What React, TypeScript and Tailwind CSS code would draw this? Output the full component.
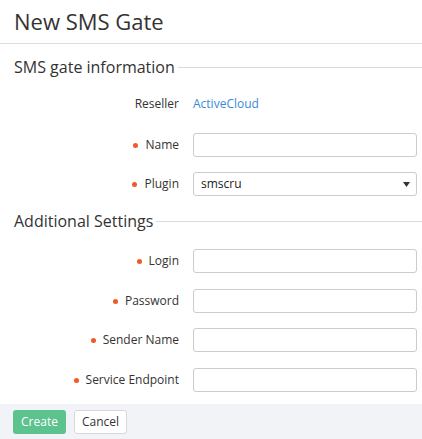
import React from "react";

const font = { fontFamily: '"Open Sans", "Noto Sans", sans-serif' };

function Label({ text, required }: { text: string; required?: boolean }) {
  return (
    <div className="w-[179px] shrink-0 flex items-center justify-end gap-[7px] text-[12px] text-[#333]">
      {required && <span className="w-[5px] h-[5px] rounded-full bg-[#f05a28]" />}
      <span>{text}</span>
    </div>
  );
}

function Field({ label, required, select }: { label: string; required?: boolean; select?: string }) {
  return (
    <div className="flex items-center h-[24px]">
      <Label text={label} required={required} />
      <div className="ml-[14px] mr-[5px] flex-1">
        {select ? (
          <div className="h-[24px] border border-[#c9ccd1] rounded-[3px] bg-white flex items-center justify-between pl-[7px] pr-[6px] text-[12px] text-[#222]">
            <span>{select}</span>
            <svg width="7" height="5" viewBox="0 0 7 5">
              <path d="M0 0h7L3.5 5z" fill="#333" />
            </svg>
          </div>
        ) : (
          <div className="h-[24px] border border-[#c9ccd1] rounded-[3px] bg-white" />
        )}
      </div>
    </div>
  );
}

function SectionTitle({ text }: { text: string }) {
  return (
    <div className="flex items-center pl-[14px] h-[24px]">
      <span className="text-[16px] text-[#333] leading-none">{text}</span>
      <div className="flex-1 h-px bg-[#d9dbe0] ml-[3px]" />
    </div>
  );
}

export default function App() {
  return (
    <div className="w-[422px] h-[439px] bg-white flex flex-col" style={font}>
      <div className="h-[44px] border-b border-[#dcdde1] pl-[14px] flex items-center">
        <h1 className="text-[22px] text-[#333] leading-none mt-[-1px]">New SMS Gate</h1>
      </div>
      <div className="mt-[11px]">
        <SectionTitle text="SMS gate information" />
      </div>
      <div className="mt-[13px] flex items-center h-[24px]">
        <Label text="Reseller" />
        <span className="ml-[14px] text-[12px] text-[#3a8bd8]">ActiveCloud</span>
      </div>
      <div className="mt-[17px]">
        <Field label="Name" required />
      </div>
      <div className="mt-[15px]">
        <Field label="Plugin" required select="smscru" />
      </div>
      <div className="mt-[13px]">
        <SectionTitle text="Additional Settings" />
      </div>
      <div className="mt-[16px]">
        <Field label="Login" required />
      </div>
      <div className="mt-[16px]">
        <Field label="Password" required />
      </div>
      <div className="mt-[15px]">
        <Field label="Sender Name" required />
      </div>
      <div className="mt-[16px]">
        <Field label="Service Endpoint" required />
      </div>
      <div className="mt-auto h-[35px] bg-[#f1f3f6] flex items-center pl-[13px] gap-[8px]">
        <button className="h-[24px] w-[53px] rounded-[3px] bg-[#5cc28e] text-white text-[12px]">
          Create
        </button>
        <button className="h-[24px] w-[53px] rounded-[3px] bg-white border border-[#d6d8dc] text-[#333] text-[12px]">
          Cancel
        </button>
      </div>
    </div>
  );
}
